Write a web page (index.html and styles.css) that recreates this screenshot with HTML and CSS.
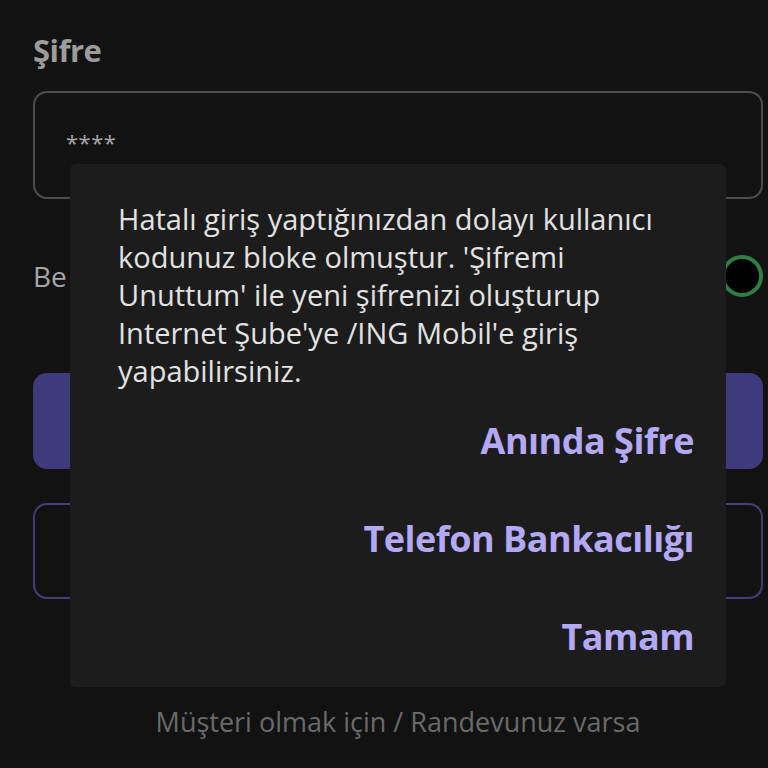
FILE: index.html
```html
<!DOCTYPE html>
<html lang="tr">
<head>
<meta charset="utf-8">
<link rel="stylesheet" href="styles.css">
</head>
<body>
<div class="page">
  <div class="label">Şifre</div>
  <div class="input"><span class="mask">****</span></div>
  <div class="row">
    <span class="row-text">Be</span>
    <span class="toggle"></span>
  </div>
  <div class="btn-primary"></div>
  <div class="btn-outline"></div>
  <div class="footer">Müşteri olmak için / Randevunuz varsa</div>
</div>
<div class="dialog">
  <p class="message">Hatalı giriş yaptığınızdan dolayı kullanıcı<br>kodunuz bloke olmuştur. 'Şifremi<br>Unuttum' ile yeni şifrenizi oluşturup<br>Internet Şube'ye /ING Mobil'e giriş<br>yapabilirsiniz.</p>
  <div class="actions">
    <span class="action">Anında Şifre</span>
    <span class="action">Telefon Bankacılığı</span>
    <span class="action">Tamam</span>
  </div>
</div>
</body>
</html>
```
FILE: styles.css
```css
html, body {
  margin: 0;
  height: 100%;
  background: #121212;
  overflow: hidden;
}
body {
  font-family: "Open Sans", "Noto Sans", sans-serif;
  position: relative;
}
.page {
  padding: 29px 5px 0 33px;
  display: flex;
  flex-direction: column;
}
.label {
  font-size: 31px;
  font-weight: 700;
  color: #9c9c9c;
  line-height: 42px;
  letter-spacing: -0.5px;
}
.input {
  margin-top: 20px;
  height: 104px;
  border: 2px solid #4e4e4e;
  border-radius: 14px;
  display: flex;
  align-items: center;
  padding-left: 31px;
  box-sizing: content-box;
}
.mask {
  color: #a8a8a8;
  font-size: 22px;
  letter-spacing: 0.5px;
  margin-top: -6px;
}
.row {
  margin-top: 53px;
  height: 48px;
  display: flex;
  align-items: center;
  justify-content: space-between;
}
.row-text {
  font-size: 28px;
  color: #a6a6a6;
}
.toggle {
  width: 34px;
  height: 34px;
  border: 4px solid #2f7d47;
  border-radius: 50%;
  background: #000;
}
.btn-primary {
  margin-top: 73px;
  height: 96px;
  border-radius: 14px;
  background: #3f3a7c;
}
.btn-outline {
  margin-top: 34px;
  height: 92px;
  border: 2px solid #433e78;
  border-radius: 14px;
}
.footer {
  margin-top: 104px;
  text-align: center;
  font-size: 27px;
  color: #6a6a6a;
}
.dialog {
  position: absolute;
  left: 70px;
  top: 164px;
  width: 656px;
  height: 523px;
  box-sizing: border-box;
  background: #1c1c1c;
  border-radius: 6px;
  padding: 36px 32px 0 48px;
  display: flex;
  flex-direction: column;
}
.message {
  margin: 0;
  font-size: 29px;
  line-height: 38px;
  color: #e2e2e2;
  white-space: nowrap;
}
.actions {
  margin-top: 25px;
  display: flex;
  flex-direction: column;
  align-items: flex-end;
  gap: 46px;
}
.action {
  font-size: 36px;
  line-height: 52px;
  font-weight: 700;
  color: #b4a9f6;
  letter-spacing: -0.5px;
}
```
